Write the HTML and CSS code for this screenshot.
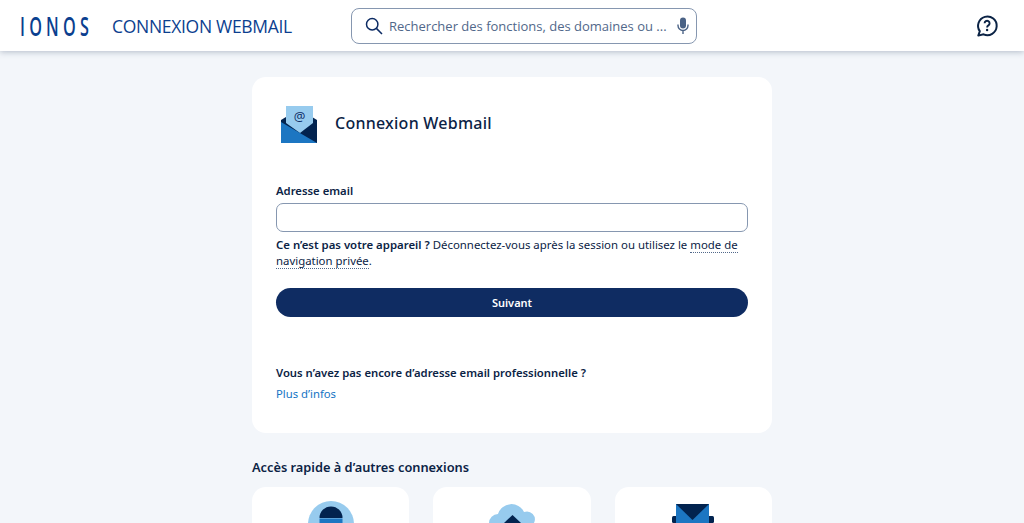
FILE: index.html
```html
<!DOCTYPE html>
<html lang="fr">
<head>
  <meta charset="UTF-8" />
  <title>Connexion Webmail</title>
  <link rel="stylesheet" href="styles.css">
</head>
<body>
  <header class="topbar">
    <div class="brand">
      <div class="logo-box"><span class="logo">IONOS</span></div>
      <span class="app-name">CONNEXION WEBMAIL</span>
    </div>
    <div class="search">
      <svg class="search-icon" width="18" height="18" viewBox="0 0 18 18" fill="none" stroke="#0b2a63" stroke-width="1.5">
        <circle cx="7.200" cy="7.200" r="5.700"/>
        <path d="M11.400 11.400l5.600 5.600"/>
      </svg>
      <span class="search-text">Rechercher des fonctions, des domaines ou ...</span>
      <svg class="mic-icon" width="12" height="18" viewBox="0 0 12 18" fill="none">
        <rect x="3" y="0.500" width="6" height="11" rx="3" fill="#4a6285"/>
        <path d="M1 7.500v1a5 5 0 0 0 10 0v-1M6 13.500v3.500" stroke="#4a6285" stroke-width="1.400"/>
      </svg>
    </div>
    <svg class="help-icon" width="24" height="24" viewBox="0 0 24 24" fill="none">
      <path d="M3.300 21.600l1.500-4.400A9.300 9.300 0 1 1 8.600 20.300z" stroke="#0b2345" stroke-width="2" stroke-linejoin="round"/>
      <path d="M9.600 9.300a2.500 2.500 0 1 1 3.800 2.100c-.9.6-1.300 1-1.300 2" stroke="#0b2345" stroke-width="1.900"/>
      <circle cx="12.100" cy="16" r="1.200" fill="#0b2345"/>
    </svg>
  </header>

  <main class="content">
    <section class="card">
      <div class="card-head">
        <svg class="mail-art" width="36" height="37" viewBox="0 0 36 37">
          <path d="M0 14l5-3h26l5 3v23H0z" fill="#02234f"/>
          <path d="M5 0h27v17l-13 10L5 17z" fill="#97cbee"/>
          <path d="M0 16l36 21H0z" fill="#1c76c2"/>
          <text x="18.500" y="15" class="at-sign">@</text>
        </svg>
        <h1>Connexion Webmail</h1>
      </div>

      <label class="field-label" for="email">Adresse email</label>
      <input class="field" id="email" type="text">
      <p class="hint"><strong>Ce n’est pas votre appareil ?</strong> Déconnectez-vous après la session ou utilisez le <a class="dotted" href="#">mode de navigation privée</a>.</p>
      <button class="next" type="button">Suivant</button>

      <p class="promo">Vous n’avez pas encore d’adresse email professionnelle ?</p>
      <a class="more" href="#">Plus d’infos</a>
    </section>

    <h2>Accès rapide à d’autres connexions</h2>
    <div class="tiles">
      <div class="tile">
        <svg width="46" height="22" viewBox="0 0 46 22">
          <circle cx="23" cy="23" r="23" fill="#97cbee"/>
          <path d="M11.500 17a11.500 11.500 0 0 1 23 0z" fill="#02234f"/>
          <rect x="11.500" y="17.500" width="23" height="5" fill="#1c76c2"/>
        </svg>
      </div>
      <div class="tile tile-cloud">
        <svg width="46" height="19" viewBox="0 0 46 19">
          <path d="M0 19a9 9 0 0 1 9-9 14 14 0 0 1 26-2 8 8 0 0 1 10 11z" fill="#97cbee"/>
          <path d="M21 19l8.500-8 8.500 8z" fill="#02234f" transform="translate(-6)"/>
        </svg>
      </div>
      <div class="tile tile-mail">
        <svg width="42" height="19" viewBox="0 0 42 19">
          <rect x="0" y="12" width="42" height="7" rx="1.500" fill="#02234f"/>
          <rect x="4" y="0" width="33" height="19" fill="#1c76c2"/>
          <path d="M4 0h33L20.500 16z" fill="#02234f"/>
        </svg>
      </div>
    </div>
  </main>
</body>
</html>
```

FILE: styles.css
```css
html, body {
  height: 100%;
}

body {
  margin: 0;
  font-family: "Noto Sans", "Open Sans", sans-serif;
  background: #f3f6fa;
  color: #0b2345;
  overflow: hidden;
}

svg {
  flex-shrink: 0;
}

.topbar {
  display: flex;
  align-items: center;
  height: 51px;
  padding: 0 25px 0 20px;
  background: #fff;
  box-shadow: 0 1px 6px rgba(60, 80, 110, 0.35);
  position: relative;
}

.brand {
  display: flex;
  align-items: center;
  flex-shrink: 0;
  width: 331px;
}

.logo-box {
  flex-shrink: 0;
  width: 92px;
}

.logo {
  display: inline-block;
  font-family: "Open Sans", sans-serif;
  font-size: 27px;
  font-weight: 600;
  letter-spacing: 7px;
  color: #0b3f8f;
  transform: scaleX(0.6);
  transform-origin: left center;
}

.app-name {
  font-family: "Open Sans", sans-serif;
  font-size: 17.500px;
  color: #0b3f8f;
  letter-spacing: -0.300px;
  white-space: nowrap;
}

.search {
  display: flex;
  align-items: center;
  box-sizing: border-box;
  flex-shrink: 0;
  width: 346px;
  height: 36px;
  padding: 0 7px 0 13px;
  border: 1px solid #8697b0;
  border-radius: 8px;
}

.search-text {
  flex: 1;
  margin-left: 6px;
  font-family: "Open Sans", sans-serif;
  font-size: 13px;
  color: #51688a;
  white-space: nowrap;
}

.help-icon {
  margin-left: auto;
}

.content {
  width: 520px;
  margin: 26px auto 0;
}

.card {
  box-sizing: border-box;
  height: 356px;
  padding: 29px 24px 0;
  background: #fff;
  border-radius: 14px;
}

.card-head {
  display: flex;
  align-items: center;
  gap: 18px;
  margin-left: 5px;
  height: 37px;
}

.card-head h1 {
  margin: -4px 0 0;
  font-size: 16px;
  font-weight: 500;
  letter-spacing: 0.250px;
}

.at-sign {
  font-family: "Open Sans", sans-serif;
  font-size: 13px;
  fill: #0b2a63;
  text-anchor: middle;
}

.field-label {
  display: block;
  margin-top: 40px;
  font-size: 11.300px;
  font-weight: 600;
  line-height: 16px;
}

.field {
  display: block;
  box-sizing: border-box;
  width: 100%;
  height: 29px;
  margin-top: 4px;
  border: 1px solid #8697b0;
  border-radius: 7px;
  background: #fff;
}

.hint {
  margin: 5px 0 0;
  font-size: 11.400px;
  line-height: 16px;
}

.hint strong {
  font-weight: 600;
}

.dotted {
  color: inherit;
  text-decoration: none;
  border-bottom: 1px dotted #51688a;
}

.next {
  display: block;
  width: 100%;
  height: 29px;
  margin-top: 19px;
  border: 0;
  border-radius: 15px;
  background: #0f2c62;
  color: #fff;
  font: 600 11px "Noto Sans", sans-serif;
}

.promo {
  margin: 48px 0 0;
  font-size: 11.300px;
  font-weight: 600;
  line-height: 16px;
}

.more {
  display: block;
  margin-top: 5px;
  font-size: 11.300px;
  line-height: 16px;
  color: #1474c4;
  text-decoration: none;
}

h2 {
  margin: 25px 0 0;
  font-size: 12.800px;
  font-weight: 600;
  line-height: 18px;
}

.tiles {
  display: grid;
  grid-template-columns: repeat(3, 1fr);
  gap: 24px;
  margin-top: 11px;
}

.tile {
  display: flex;
  justify-content: center;
  box-sizing: border-box;
  height: 36px;
  padding-top: 14px;
  background: #fff;
  border-radius: 14px 14px 0 0;
}

.tile-cloud,
.tile-mail {
  padding-top: 17px;
}
```
